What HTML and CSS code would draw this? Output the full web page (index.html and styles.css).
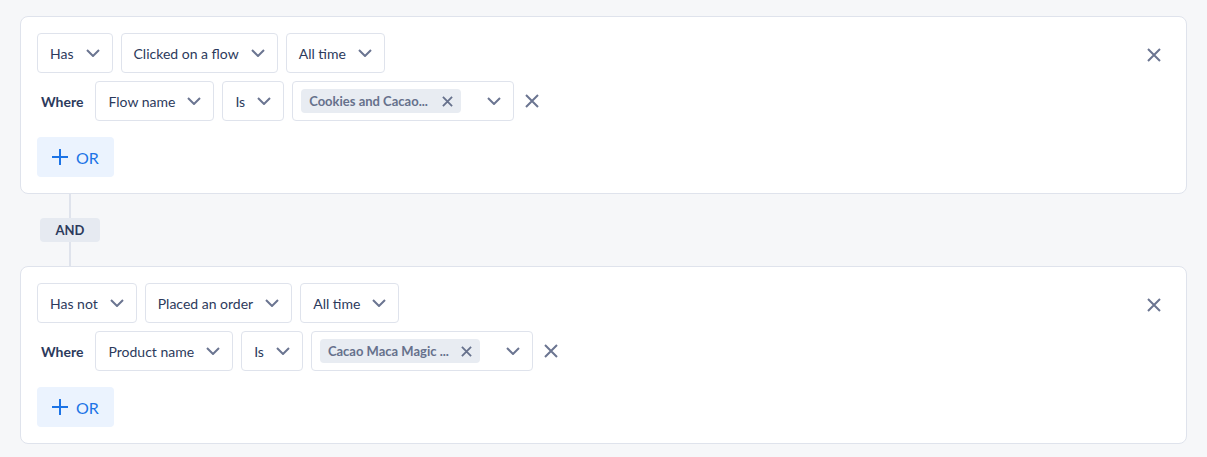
FILE: index.html
```html
<!DOCTYPE html>
<html lang="en">
<head>
    <meta charset="UTF-8">
    <title>Segment conditions</title>
    <link rel="stylesheet" href="styles.css">
</head>
<body>

<div class="builder">

    <div class="group">
        <div class="group-body">
            <div class="row">
                <button class="select">Has <svg class="chev" viewBox="0 0 14 8"><path d="M1 1l6 6 6-6"/></svg></button>
                <button class="select">Clicked on a flow <svg class="chev" viewBox="0 0 14 8"><path d="M1 1l6 6 6-6"/></svg></button>
                <button class="select">All time <svg class="chev" viewBox="0 0 14 8"><path d="M1 1l6 6 6-6"/></svg></button>
            </div>
            <div class="row">
                <span class="where">Where</span>
                <button class="select">Flow name <svg class="chev" viewBox="0 0 14 8"><path d="M1 1l6 6 6-6"/></svg></button>
                <button class="select">Is <svg class="chev" viewBox="0 0 14 8"><path d="M1 1l6 6 6-6"/></svg></button>
                <div class="multi">
                    <span class="tag">
                        <span class="tag-text">Cookies and Cacao...</span>
                        <svg class="tag-x" viewBox="0 0 12 12"><path d="M1 1l10 10M11 1L1 11"/></svg>
                    </span>
                    <svg class="chev" viewBox="0 0 14 8"><path d="M1 1l6 6 6-6"/></svg>
                </div>
                <button class="icon-btn row-x"><svg viewBox="0 0 14 14"><path d="M1 1l12 12M13 1L1 13"/></svg></button>
            </div>
            <button class="or-btn"><svg viewBox="0 0 16 16"><path d="M8 0v16M0 8h16"/></svg>OR</button>
        </div>
        <button class="icon-btn group-x"><svg viewBox="0 0 14 14"><path d="M1 1l12 12M13 1L1 13"/></svg></button>
    </div>

    <div class="joiner">
        <span class="line"></span>
        <span class="and">AND</span>
        <span class="line"></span>
    </div>

    <div class="group">
        <div class="group-body">
            <div class="row">
                <button class="select">Has not <svg class="chev" viewBox="0 0 14 8"><path d="M1 1l6 6 6-6"/></svg></button>
                <button class="select">Placed an order <svg class="chev" viewBox="0 0 14 8"><path d="M1 1l6 6 6-6"/></svg></button>
                <button class="select">All time <svg class="chev" viewBox="0 0 14 8"><path d="M1 1l6 6 6-6"/></svg></button>
            </div>
            <div class="row">
                <span class="where">Where</span>
                <button class="select">Product name <svg class="chev" viewBox="0 0 14 8"><path d="M1 1l6 6 6-6"/></svg></button>
                <button class="select">Is <svg class="chev" viewBox="0 0 14 8"><path d="M1 1l6 6 6-6"/></svg></button>
                <div class="multi">
                    <span class="tag">
                        <span class="tag-text">Cacao Maca Magic ...</span>
                        <svg class="tag-x" viewBox="0 0 12 12"><path d="M1 1l10 10M11 1L1 11"/></svg>
                    </span>
                    <svg class="chev" viewBox="0 0 14 8"><path d="M1 1l6 6 6-6"/></svg>
                </div>
                <button class="icon-btn row-x"><svg viewBox="0 0 14 14"><path d="M1 1l12 12M13 1L1 13"/></svg></button>
            </div>
            <button class="or-btn"><svg viewBox="0 0 16 16"><path d="M8 0v16M0 8h16"/></svg>OR</button>
        </div>
        <button class="icon-btn group-x"><svg viewBox="0 0 14 14"><path d="M1 1l12 12M13 1L1 13"/></svg></button>
    </div>

</div>

</body>
</html>
```

FILE: styles.css
```css
body {
    margin: 0;
    background-color: #f6f7f9;
    font-family: Lato, "Open Sans", sans-serif;
    color: #2c3a5c;
}
.builder {
    padding: 16px 20px;
}
.group {
    display: flex;
    align-items: flex-start;
    padding: 16px;
    background-color: white;
    border: 1px solid #dfe3ec;
    border-radius: 8px;
}
.group-body {
    flex: 1;
    display: flex;
    flex-direction: column;
    align-items: flex-start;
    gap: 8px;
}
.row {
    display: flex;
    align-items: center;
    gap: 8px;
}
.select {
    display: flex;
    align-items: center;
    gap: 12px;
    height: 40px;
    padding: 0 12px;
    background-color: white;
    border: 1px solid #dfe3ec;
    border-radius: 4px;
    font-family: inherit;
    font-size: 14px;
    color: #2c3a5c;
    cursor: pointer;
}
.chev {
    width: 14px;
    height: 8px;
    fill: none;
    stroke: #6b7591;
    stroke-width: 2;
}
.where {
    margin: 0 4px;
    font-size: 14px;
    font-weight: bold;
}
.multi {
    display: flex;
    align-items: center;
    justify-content: space-between;
    box-sizing: border-box;
    width: 222px;
    height: 40px;
    padding: 0 12px 0 8px;
    border: 1px solid #dfe3ec;
    border-radius: 4px;
}
.tag {
    display: flex;
    align-items: center;
    gap: 8px;
    box-sizing: border-box;
    width: 160px;
    height: 24px;
    padding: 0 8px;
    background-color: #e8ecf2;
    border-radius: 4px;
    color: #66718c;
    font-size: 13px;
    font-weight: bold;
}
.tag-text {
    flex: 1;
    white-space: nowrap;
}
.tag-x {
    width: 11px;
    height: 11px;
    fill: none;
    stroke: #66718c;
    stroke-width: 2;
}
.icon-btn {
    display: flex;
    align-items: center;
    justify-content: center;
    width: 24px;
    height: 24px;
    padding: 0;
    background: none;
    border: none;
    cursor: pointer;
}
.icon-btn svg {
    width: 14px;
    height: 14px;
    fill: none;
    stroke: #6b7591;
    stroke-width: 2;
}
.row-x {
    margin-left: -2px;
}
.group-x {
    margin: 10px 4px 0 0;
}
.or-btn {
    display: flex;
    align-items: center;
    gap: 8px;
    height: 40px;
    margin-top: 8px;
    padding: 0 15px;
    background-color: #ebf3fe;
    border: none;
    border-radius: 4px;
    font-family: inherit;
    font-size: 16px;
    color: #1c74e6;
    cursor: pointer;
}
.or-btn svg {
    width: 16px;
    height: 16px;
    fill: none;
    stroke: #1c74e6;
    stroke-width: 2;
}
.joiner {
    display: flex;
    flex-direction: column;
    align-items: center;
    width: 60px;
    height: 72px;
    margin-left: 20px;
}
.line {
    flex: 1;
    width: 2px;
    background-color: #dfe3ec;
}
.and {
    box-sizing: border-box;
    width: 60px;
    line-height: 24px;
    text-align: center;
    background-color: #e6eaf1;
    border-radius: 4px;
    font-size: 13px;
    font-weight: bold;
    color: #2c3a5c;
}
```
